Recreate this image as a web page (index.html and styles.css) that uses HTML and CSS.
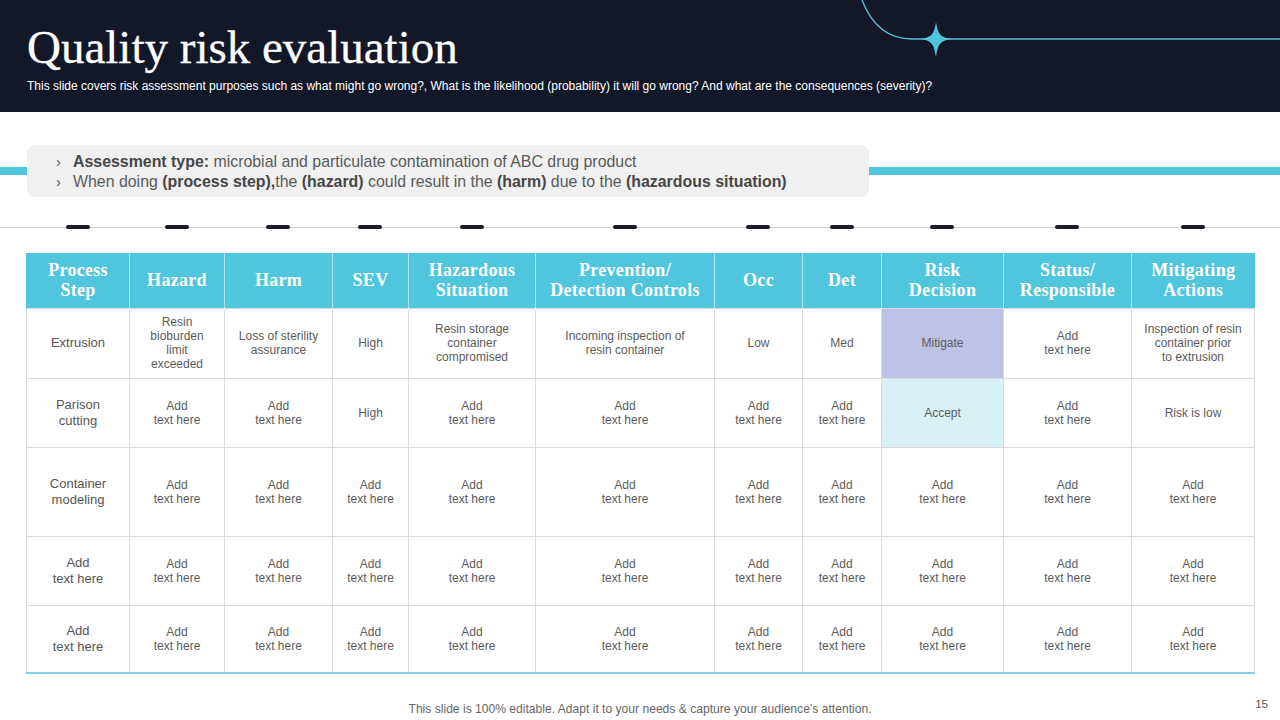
FILE: index.html
```html
<!DOCTYPE html>
<html lang="en">
<head>
<meta charset="utf-8">
<title>Quality risk evaluation</title>
<link rel="stylesheet" href="styles.css">
</head>
<body>
<div class="slide">
  <header class="top">
    <svg class="deco" width="420" height="70" viewBox="860 0 420 70" aria-hidden="true">
      <path d="M862 0 C872 26 888 39 912 39 L1280 39" fill="none" stroke="#5bbbd9" stroke-width="1.4"/>
      <path d="M936 22 C938 34 940 37 951 39 C940 41 938 44 936 57 C934 44 932 41 921 39 C932 37 934 34 936 22 Z" fill="#4fc6de"/>
    </svg>
    <h1 class="title">Quality risk evaluation</h1>
    <p class="subtitle">This slide covers risk assessment purposes such as what might go wrong?, What is the likelihood (probability) it will go wrong? And what are the consequences (severity)?</p>
  </header>

  <section class="assess">
    <ul class="assess-box">
      <li><span class="chev">›</span><span><b>Assessment type:</b> microbial and particulate contamination of ABC drug product</span></li>
      <li><span class="chev">›</span><span>When doing <b>(process step),</b>the <b>(hazard)</b> could result in the <b>(harm)</b> due to the <b>(hazardous situation)</b></span></li>
    </ul>
  </section>

  <div class="markers">
    <span></span><span></span><span></span><span></span><span></span><span></span><span></span><span></span><span></span><span></span><span></span>
  </div>

  <table class="risk">
    <colgroup>
      <col class="c1"><col class="c2"><col class="c3"><col class="c4"><col class="c5"><col class="c6"><col class="c7"><col class="c8"><col class="c9"><col class="c10"><col class="c11">
    </colgroup>
    <thead>
      <tr>
        <th>Process<br>Step</th>
        <th>Hazard</th>
        <th>Harm</th>
        <th>SEV</th>
        <th>Hazardous<br>Situation</th>
        <th>Prevention/<br>Detection Controls</th>
        <th>Occ</th>
        <th>Det</th>
        <th>Risk<br>Decision</th>
        <th>Status/<br>Responsible</th>
        <th>Mitigating<br>Actions</th>
      </tr>
    </thead>
    <tbody>
      <tr class="r1">
        <td class="first">Extrusion</td>
        <td>Resin<br>bioburden<br>limit<br>exceeded</td>
        <td>Loss of sterility<br>assurance</td>
        <td>High</td>
        <td>Resin storage<br>container<br>compromised</td>
        <td>Incoming inspection of<br>resin container</td>
        <td>Low</td>
        <td>Med</td>
        <td class="mitigate">Mitigate</td>
        <td>Add<br>text here</td>
        <td>Inspection of resin<br>container prior<br>to extrusion</td>
      </tr>
      <tr class="r2">
        <td class="first">Parison<br>cutting</td>
        <td>Add<br>text here</td>
        <td>Add<br>text here</td>
        <td>High</td>
        <td>Add<br>text here</td>
        <td>Add<br>text here</td>
        <td>Add<br>text here</td>
        <td>Add<br>text here</td>
        <td class="accept">Accept</td>
        <td>Add<br>text here</td>
        <td>Risk is low</td>
      </tr>
      <tr class="r3">
        <td class="first">Container<br>modeling</td>
        <td>Add<br>text here</td>
        <td>Add<br>text here</td>
        <td>Add<br>text here</td>
        <td>Add<br>text here</td>
        <td>Add<br>text here</td>
        <td>Add<br>text here</td>
        <td>Add<br>text here</td>
        <td>Add<br>text here</td>
        <td>Add<br>text here</td>
        <td>Add<br>text here</td>
      </tr>
      <tr class="r4">
        <td class="first">Add<br>text here</td>
        <td>Add<br>text here</td>
        <td>Add<br>text here</td>
        <td>Add<br>text here</td>
        <td>Add<br>text here</td>
        <td>Add<br>text here</td>
        <td>Add<br>text here</td>
        <td>Add<br>text here</td>
        <td>Add<br>text here</td>
        <td>Add<br>text here</td>
        <td>Add<br>text here</td>
      </tr>
      <tr class="r5">
        <td class="first">Add<br>text here</td>
        <td>Add<br>text here</td>
        <td>Add<br>text here</td>
        <td>Add<br>text here</td>
        <td>Add<br>text here</td>
        <td>Add<br>text here</td>
        <td>Add<br>text here</td>
        <td>Add<br>text here</td>
        <td>Add<br>text here</td>
        <td>Add<br>text here</td>
        <td>Add<br>text here</td>
      </tr>
    </tbody>
  </table>

  <footer class="foot">
    <span></span>
    <p class="note">This slide is 100% editable. Adapt it to your needs &amp; capture your audience’s attention.</p>
    <span class="page">15</span>
  </footer>
</div>
</body>
</html>
```

FILE: styles.css
```css
* { box-sizing: border-box; }

html, body {
  margin: 0;
  padding: 0;
  background: #ffffff;
}

.slide {
  width: 1280px;
  height: 720px;
  overflow: hidden;
  font-family: "Liberation Sans", Arial, sans-serif;
  color: #555555;
  background: #ffffff;
}

/* ---------- header ---------- */
.top {
  position: relative;
  height: 112px;
  background: #131829;
  padding: 24px 0 0 27px;
}

.deco {
  position: absolute;
  left: 860px;
  top: 0;
}

.title {
  margin: 0;
  font-family: "Liberation Serif", "Times New Roman", serif;
  font-weight: normal;
  font-size: 47px;
  line-height: 46px;
  color: #ffffff;
  -webkit-text-stroke: 0.3px #ffffff;
}

.subtitle {
  margin: 9px 0 0;
  font-size: 12px;
  line-height: 14px;
  color: #ffffff;
}

/* ---------- assessment box ---------- */
.assess {
  height: 85px;
  padding-top: 33px;
  background: linear-gradient(to bottom, transparent 55px, #4fc6de 55px, #4fc6de 63px, transparent 63px);
}

.assess-box {
  list-style: none;
  margin: 0 0 0 27px;
  width: 842px;
  height: 52px;
  padding: 7px 0 0 29px;
  background: #f0f0f0;
  border-radius: 8px;
}

.assess-box li {
  display: flex;
  font-size: 15.9px;
  line-height: 20px;
  color: #5a5a5a;
  white-space: nowrap;
}

.assess-box b {
  color: #474747;
}

.chev {
  width: 17px;
  flex: none;
  font-size: 15px;
}

/* ---------- marker line ---------- */
.markers {
  height: 56px;
  padding: 28px 26px 0;
  display: grid;
  grid-template-columns: 103px 95px 108px 76px 127px 179px 88px 79px 122px 128px 123px;
  align-items: start;
  background: linear-gradient(#d2d2d2, #d2d2d2) 0 30px / 100% 1px no-repeat;
}

.markers span {
  justify-self: center;
  width: 24px;
  height: 4px;
  border-radius: 2px;
  background: #1a1c2a;
}

/* ---------- table ---------- */
.risk {
  margin-left: 26px;
  width: 1228px;
  table-layout: fixed;
  border-collapse: collapse;
}

.c1 { width: 103px; }
.c2 { width: 95px; }
.c3 { width: 108px; }
.c4 { width: 76px; }
.c5 { width: 127px; }
.c6 { width: 179px; }
.c7 { width: 88px; }
.c8 { width: 79px; }
.c9 { width: 122px; }
.c10 { width: 128px; }
.c11 { width: 123px; }

.risk th {
  height: 55px;
  padding: 0;
  background: #4fc6de;
  color: #ffffff;
  font-family: "Liberation Serif", "Times New Roman", serif;
  font-weight: bold;
  font-size: 18px;
  line-height: 20px;
  letter-spacing: 0.3px;
  text-align: center;
  vertical-align: middle;
  border-left: 1px solid rgba(255, 255, 255, 0.55);
}

.risk th:first-child {
  border-left: 1px solid #4fc6de;
}

.risk td {
  padding: 0 2px;
  text-align: center;
  vertical-align: middle;
  font-size: 12px;
  line-height: 14px;
  color: #5c5c5c;
  border: 1px solid #dadada;
}

.risk td.first {
  font-size: 13px;
  line-height: 16px;
  color: #555555;
}

.risk .r1 td { height: 70px; }
.risk .r2 td { height: 69px; }
.risk .r3 td { height: 89px; }
.risk .r4 td { height: 69px; }
.risk .r5 td { height: 68px; border-bottom: 2px solid #86cde2; }

.risk td.mitigate { background: #bec2e6; }
.risk td.accept { background: #d8f1f6; }

/* ---------- footer ---------- */
.foot {
  display: grid;
  grid-template-columns: 1fr auto 1fr;
  padding-top: 28px;
}

.note {
  margin: 0;
  font-size: 12.1px;
  line-height: 14px;
  color: #666666;
}

.page {
  justify-self: end;
  margin: -5px 12px 0 0;
  font-size: 11.5px;
  line-height: 14px;
  color: #555555;
}
```
